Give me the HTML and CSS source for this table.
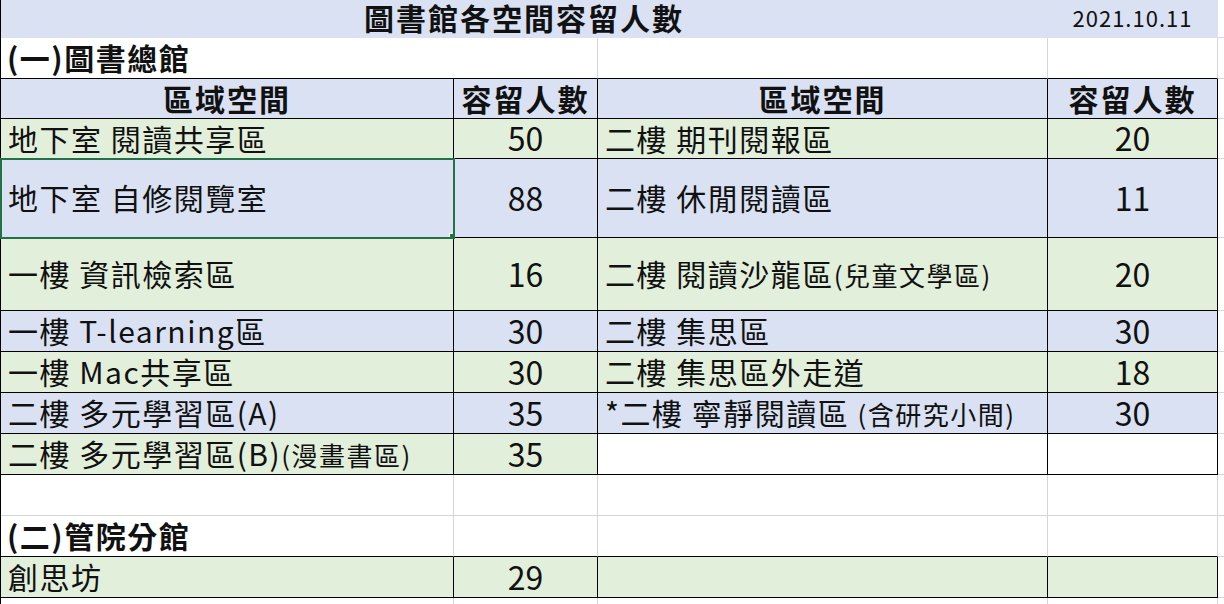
FILE: index.html
```html
<!DOCTYPE html>
<html lang="zh-Hant">
<head>
<meta charset="utf-8">
<title>圖書館各空間容留人數</title>
<link rel="stylesheet" href="styles.css">
</head>
<body>
<div class="sheet">
  <!-- title row -->
  <div class="c title blue span3"><span>圖書館各空間容留人數</span></div>
  <div class="c date blue"><span>2021.10.11</span></div>
  <div class="c edge"></div>

  <!-- section 1 -->
  <div class="c sec span2 bb"><span>(一)圖書總館</span></div>
  <div class="c bb"></div>
  <div class="c bb"></div>
  <div class="c edge"></div>

  <!-- header -->
  <div class="c k blue hd"><span>區域空間</span></div>
  <div class="c k blue hd"><span>容留人數</span></div>
  <div class="c k blue hd"><span>區域空間</span></div>
  <div class="c k blue hd"><span>容留人數</span></div>
  <div class="c edge"></div>

  <div class="c k green"><span>地下室 閱讀共享區</span></div>
  <div class="c k green num"><span>50</span></div>
  <div class="c k green"><span>二樓 期刊閱報區</span></div>
  <div class="c k green num"><span>20</span></div>
  <div class="c edge"></div>

  <div class="c k blue sel"><span>地下室 自修閱覽室</span></div>
  <div class="c k blue num"><span>88</span></div>
  <div class="c k blue"><span>二樓 休閒閱讀區</span></div>
  <div class="c k blue num"><span>11</span></div>
  <div class="c edge"></div>

  <div class="c k green"><span>一樓 資訊檢索區</span></div>
  <div class="c k green num"><span>16</span></div>
  <div class="c k green"><span>二樓 閱讀沙龍區<span class="sm">(兒童文學區)</span></span></div>
  <div class="c k green num"><span>20</span></div>
  <div class="c edge"></div>

  <div class="c k blue"><span>一樓 T-learning區</span></div>
  <div class="c k blue num"><span>30</span></div>
  <div class="c k blue"><span>二樓 集思區</span></div>
  <div class="c k blue num"><span>30</span></div>
  <div class="c edge"></div>

  <div class="c k green"><span>一樓 Mac共享區</span></div>
  <div class="c k green num"><span>30</span></div>
  <div class="c k green"><span>二樓 集思區外走道</span></div>
  <div class="c k green num"><span>18</span></div>
  <div class="c edge"></div>

  <div class="c k blue"><span>二樓 多元學習區(A)</span></div>
  <div class="c k blue num"><span>35</span></div>
  <div class="c k blue"><span>*二樓 寧靜閱讀區 <span class="sm">(含研究小間)</span></span></div>
  <div class="c k blue num"><span>30</span></div>
  <div class="c edge"></div>

  <div class="c k green"><span>二樓 多元學習區(B)<span class="sm">(漫畫書區)</span></span></div>
  <div class="c k green num"><span>35</span></div>
  <div class="c k"></div>
  <div class="c k"></div>
  <div class="c edge"></div>

  <!-- empty row -->
  <div class="c"></div>
  <div class="c"></div>
  <div class="c"></div>
  <div class="c"></div>
  <div class="c edge"></div>

  <!-- section 2 -->
  <div class="c sec bb"><span>(二)管院分館</span></div>
  <div class="c bb"></div>
  <div class="c bb"></div>
  <div class="c bb"></div>
  <div class="c edge"></div>

  <div class="c k green"><span>創思坊</span></div>
  <div class="c k green num"><span>29</span></div>
  <div class="c k green"></div>
  <div class="c k green"></div>
  <div class="c edge"></div>

  <div class="c"></div>
  <div class="c"></div>
  <div class="c"></div>
  <div class="c"></div>
  <div class="c edge"></div>
</div>
</body>
</html>
```

FILE: styles.css
```css
html, body {
  margin: 0;
  padding: 0;
  background: #ffffff;
}

body {
  width: 1224px;
  height: 604px;
  overflow: hidden;
  font-family: "Noto Sans CJK TC", "Noto Sans", sans-serif;
  color: #111;
}

.sheet {
  display: grid;
  grid-template-columns: 453px 144px 450px 170px 6px;
  grid-template-rows: 38px 41px 40px 40px 79px 73px 41px 41px 41px 41px 41px 41px 41px 20px;
  border-left: 1px solid #000;
}

.c {
  box-sizing: border-box;
  display: flex;
  align-items: center;
  padding: 0 7px 2px;
  border-right: 1px solid #d6d6d6;
  border-bottom: 1px solid #d6d6d6;
  font-size: 30px;
  letter-spacing: 1.5px;
  line-height: 1.2;
  white-space: nowrap;
  overflow: hidden;
  background: #ffffff;
}

.span3 { grid-column: span 3; }
.span2 { grid-column: span 2; }

.blue { background: #d9e1f2; }
.green { background: #e2efda; }

.k {
  border-right-color: #000;
  border-bottom-color: #000;
}

.bb { border-bottom-color: #000; }

.edge {
  padding: 0;
  border-right: none;
}

.title {
  justify-content: center;
  font-weight: 700;
  font-size: 30px;
  letter-spacing: 2px;
  border-color: transparent;
  padding-bottom: 3px;
}

.date {
  justify-content: center;
  font-size: 22px;
  letter-spacing: 1px;
  border-color: transparent;
  padding-bottom: 3px;
}

.sec {
  font-weight: 700;
  font-size: 30px;
  letter-spacing: 1.5px;
  padding-left: 6px;
}

.hd {
  justify-content: center;
  font-weight: 700;
  letter-spacing: 2px;
}

.num {
  justify-content: center;
  font-size: 32px;
  letter-spacing: 0;
}

.sm {
  font-size: 26px;
  letter-spacing: 1.5px;
}

.sel {
  position: relative;
  outline: 2px solid #217346;
  outline-offset: -1px;
}

.sel::after {
  content: "";
  position: absolute;
  right: -4px;
  bottom: -4px;
  width: 6px;
  height: 6px;
  background: #217346;
  border: 1px solid #fff;
  z-index: 2;
}
```
